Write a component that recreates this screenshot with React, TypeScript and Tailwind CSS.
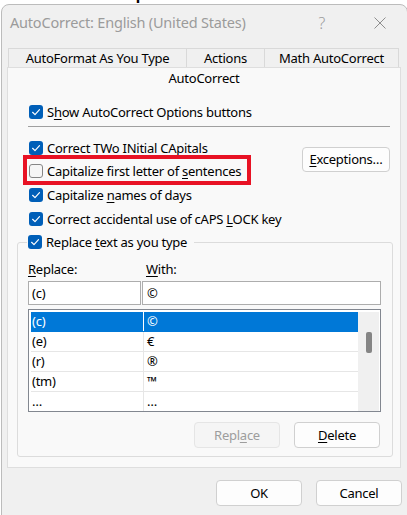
import React from 'react';

// mnemonic letter (underlined access key)
const K: React.FC<{ children: React.ReactNode }> = ({ children }) => (
  <span className="underline decoration-1 underline-offset-[2px]">{children}</span>
);

const Check: React.FC<{ checked?: boolean }> = ({ checked = true }) =>
  checked ? (
    <span className="w-[14px] h-[14px] rounded-[3px] bg-[#005fb8] flex items-center justify-center shrink-0">
      <svg width="10" height="10" viewBox="0 0 10 10" fill="none">
        <path d="M1.6 5.3 L4 7.6 L8.5 2.7" stroke="white" strokeWidth="1.2" strokeLinecap="round" strokeLinejoin="round" />
      </svg>
    </span>
  ) : (
    <span className="w-[14px] h-[14px] rounded-[3px] border border-[#868686] bg-[#f6f6f6] shrink-0" />
  );

interface CheckRowProps {
  checked?: boolean;
  className?: string;
  children: React.ReactNode;
}

const CheckRow: React.FC<CheckRowProps> = ({ checked = true, className = '', children }) => (
  <div className={`flex items-center gap-[4px] h-[16px] ${className}`}>
    <Check checked={checked} />
    <span className="leading-[16px] text-black whitespace-nowrap">{children}</span>
  </div>
);

const rows = [
  { from: '(c)', to: '©' },
  { from: '(e)', to: '€' },
  { from: '(r)', to: '®' },
  { from: '(tm)', to: '™' },
  { from: '…', to: '…' },
];

export default function App() {
  return (
    <div className="w-[407px] h-[515px] bg-white overflow-hidden font-['Noto_Sans',sans-serif] text-[13px] tracking-[-0.25px] text-black">
      {/* window behind the dialog */}
      <div className="h-[4px] overflow-hidden pl-[32px]">
        <div className="-mt-[15px] text-[15px] leading-[18px] font-bold whitespace-nowrap">AutoCorrect Options</div>
      </div>

      <div className="ml-[1px] w-[407px] h-[530px] bg-[#f0f0f0] border border-[#bcbcbc] rounded-[8px] flex flex-col">
        {/* Title bar */}
        <div className="h-[35px] flex items-center pl-[8px] text-[14.5px] tracking-[-0.2px] text-[#9b9b9b] whitespace-nowrap">
          <span>AutoCorrect: English (United States)</span>
          <span className="ml-auto mr-[49px] text-[16px] font-light">?</span>
          <svg className="mr-[21px]" width="12" height="12" viewBox="0 0 12 12">
            <path d="M0.5 0.5 L11.5 11.5 M11.5 0.5 L0.5 11.5" stroke="#8e8e8e" strokeWidth="1" />
          </svg>
        </div>

        {/* Tabs */}
        <div className="mt-[8px] ml-[6px] flex h-[19px] leading-[19px] whitespace-nowrap">
          <div className="w-[178px] border-t border-l border-[#d9d9d9] text-center">AutoFormat As You Type</div>
          <div className="w-[78px] border-t border-l border-[#d9d9d9] text-center">Actions</div>
          <div className="w-[135px] border-t border-l border-r border-[#d9d9d9] text-center">Math AutoCorrect</div>
        </div>

        {/* Panel */}
        <div className="ml-[5px] w-[394px] border border-[#dedede] bg-[#f9f9f9] pb-[10px]">
          <div className="h-[20px] leading-[20px] text-center">AutoCorrect</div>

          <CheckRow className="mt-[16px] ml-[21px]">
            S<K>h</K>ow AutoCorrect Options buttons
          </CheckRow>
          <div className="mt-[6px] ml-[20px] w-[362px] h-px bg-[#a0a0a0]" />

          <div className="mt-[13px] flex">
            <div className="ml-[21px]">
              <CheckRow>
                C<K>o</K>rrect TWo INitial CApitals
              </CheckRow>
              <div className="relative mt-[7px]">
                <CheckRow checked={false}>
                  Capitalize first letter of <K>s</K>entences
                </CheckRow>
                <span className="absolute -left-[6px] -top-[8px] w-[228px] h-[30px] border-[4px] border-[#e81224]" />
              </div>
            </div>
            <button className="mt-[7px] ml-auto mr-[10px] w-[88px] h-[25px] rounded-[4px] border border-[#d0d0d0] bg-[#fdfdfd] leading-[23px]">
              <K>E</K>xceptions…
            </button>
          </div>

          <CheckRow className="mt-[8px] ml-[21px]">
            Capitalize <K>n</K>ames of days
          </CheckRow>
          <CheckRow className="mt-[8px] ml-[21px]">
            Correct accidental use of cAPS <K>L</K>OCK key
          </CheckRow>

          {/* Replace group */}
          <div className="mt-[15px] ml-[9px] w-[376px] border border-[#dcdcdc] rounded-[3px] pb-[8px]">
            <div className="-mt-[9px] ml-[9px] w-fit bg-[#f9f9f9] pl-[1px] pr-[7px]">
              <CheckRow>
                Replace <K>t</K>ext as you type
              </CheckRow>
            </div>

            <div className="mt-[11px] ml-[10px] flex h-[16px] leading-[16px]">
              <span className="w-[118px]">
                <K>R</K>eplace:
              </span>
              <span>
                <K>W</K>ith:
              </span>
            </div>

            <div className="mt-[4px] ml-[10px] flex">
              <div className="w-[113px] h-[24px] border border-[#adadad] bg-white pl-[3px] leading-[22px]">(c)</div>
              <div className="ml-[1px] w-[239px] h-[24px] border border-[#adadad] bg-white pl-[4px] leading-[22px]">©</div>
            </div>

            <div className="mt-[4px] ml-[10px] w-[353px] h-[103px] border border-[#828790] bg-white flex pt-[2px] pl-[2px] pr-[1px] overflow-hidden">
              <div className="w-[327px]">
                {rows.map((r, i) => (
                  <div
                    key={i}
                    className={`flex h-[20px] border-b ${i === 0 ? 'bg-[#0078d7] text-white border-[#0078d7]' : 'border-[#e6e6e6]'}`}
                  >
                    <div className={`w-[113px] border-r pl-[1px] leading-[19px] ${i === 0 ? 'border-white' : 'border-[#e6e6e6]'}`}>{r.from}</div>
                    <div className="pl-[3px] leading-[19px]">{r.to}</div>
                  </div>
                ))}
              </div>
              <div className="w-[21px] bg-[#f0f0f0]">
                <div className="mt-[20px] ml-[8px] w-[6px] h-[21px] rounded-[2px] bg-[#858585]" />
              </div>
            </div>

            <div className="mt-[10px] flex justify-end gap-[14px] pr-[12px]">
              <button className="w-[86px] h-[26px] rounded-[4px] border border-[#e5e5e5] bg-[#f5f5f5] text-[#9d9d9d] leading-[24px]">
                Repl<K>a</K>ce
              </button>
              <button className="w-[86px] h-[26px] rounded-[4px] border border-[#d0d0d0] bg-[#fdfdfd] leading-[24px]">
                <K>D</K>elete
              </button>
            </div>
          </div>
        </div>

        {/* OK / Cancel */}
        <div className="mt-[12px] flex justify-end gap-[14px] pr-[5px]">
          <button className="w-[86px] h-[26px] rounded-[4px] border border-[#d0d0d0] bg-[#fdfdfd] leading-[24px]">OK</button>
          <button className="w-[86px] h-[26px] rounded-[4px] border border-[#d0d0d0] bg-[#fdfdfd] leading-[24px]">Cancel</button>
        </div>
      </div>
    </div>
  );
}
